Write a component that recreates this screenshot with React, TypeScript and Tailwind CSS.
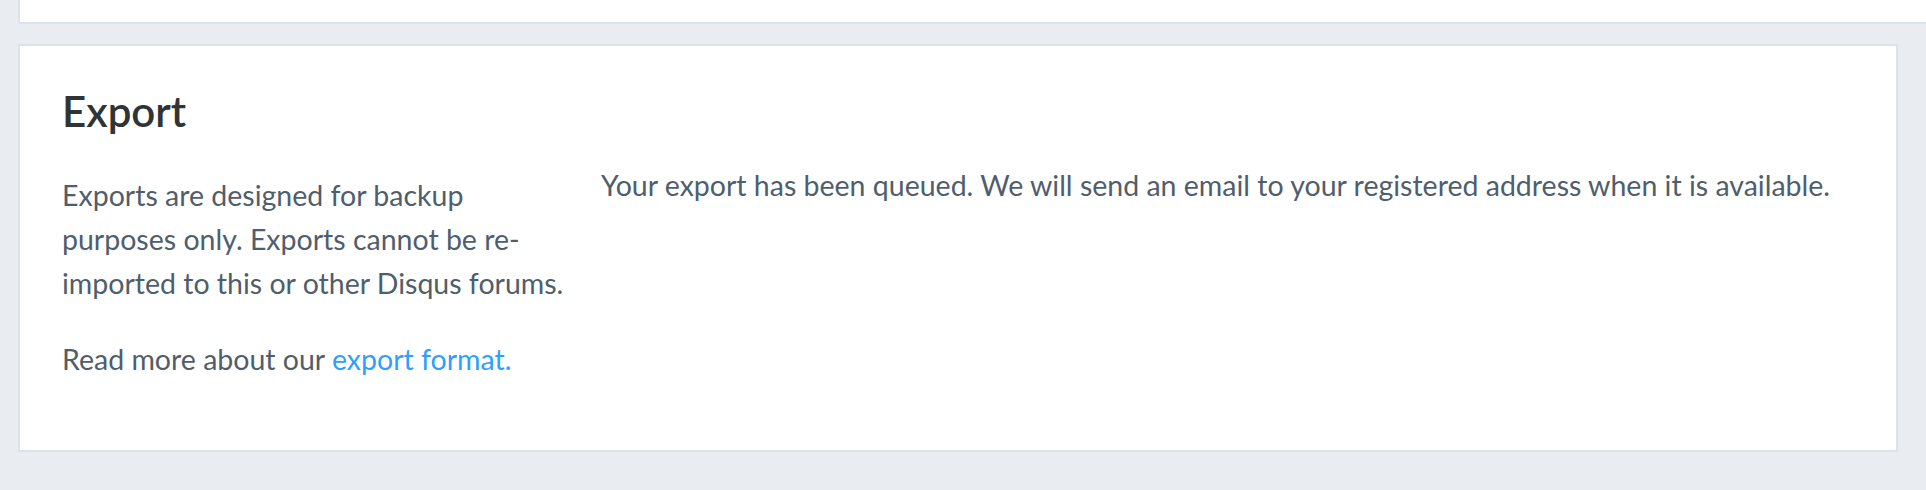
export default function App() {
  return (
    <div className="min-h-[490px] bg-[#e9edf2] font-['Lato',sans-serif] overflow-hidden">
      {/* previous panel (cut off at the top) */}
      <div className="ml-[18px] h-[24px] bg-white border-l-2 border-b-2 border-[#dde1e8] rounded-bl-[3px]" />

      {/* Export panel */}
      <section className="mt-[20px] ml-[18px] w-[1880px] h-[408px] bg-white border-2 border-[#dde1e8] flex pl-[42px] pt-[41px]">
        <div className="w-[515px] shrink-0">
          <h2 className="text-[42px] leading-[48px] font-semibold text-[#2f3437] mb-[38px]">Export</h2>
          <p className="text-[28.5px] leading-[44px] text-[#4f5e6c]">
            Exports are designed for backup purposes only. Exports cannot be re-imported to this or other Disqus forums.
          </p>
          <p className="mt-[32px] text-[28.5px] leading-[44px] text-[#4f5e6c]">
            Read more about our{" "}
            <a href="#" className="text-[#2e9fff]">
              export format.
            </a>
          </p>
        </div>
        <div className="ml-[24px] pt-[76px]">
          <p className="text-[28.5px] leading-[44px] text-[#4f5e6c]">
            Your export has been queued. We will send an email to your registered address when it is available.
          </p>
        </div>
      </section>
    </div>
  );
}
